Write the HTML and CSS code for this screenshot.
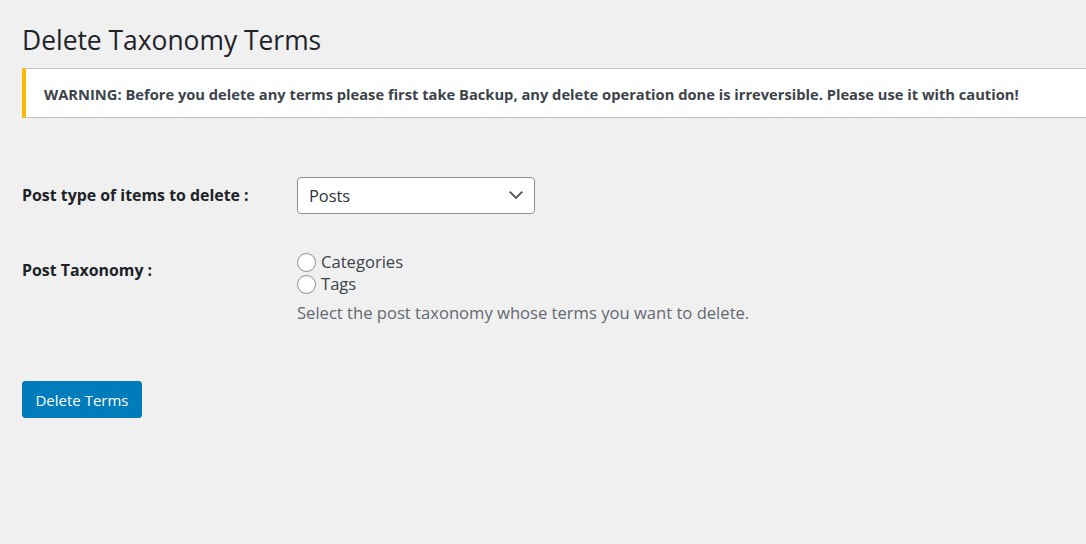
FILE: index.html
```html
<!DOCTYPE html>
<html>
<head>
<meta charset="utf-8">
<link rel="stylesheet" href="styles.css">
</head>
<body>
<div class="wrap">
  <h1 class="title">Delete Taxonomy Terms</h1>
  <div class="notice">
    <p>WARNING: Before you delete any terms please first take Backup, any delete operation done is irreversible. Please use it with caution!</p>
  </div>
  <div class="form">
    <div class="row row-type">
      <div class="label">Post type of items to delete :</div>
      <div class="field">
        <div class="select">
          <span>Posts</span>
          <svg class="chev" width="16" height="16" viewBox="0 0 16 16"><path d="M1.7 4.6 L8 10.9 L14.3 4.6" fill="none" stroke="#50575e" stroke-width="2"/></svg>
        </div>
      </div>
    </div>
    <div class="row row-tax">
      <div class="label">Post Taxonomy :</div>
      <div class="field">
        <label class="radio"><span class="circle"></span>Categories</label>
        <label class="radio"><span class="circle"></span>Tags</label>
        <p class="desc">Select the post taxonomy whose terms you want to delete.</p>
      </div>
    </div>
  </div>
  <button class="btn">Delete Terms</button>
</div>
</body>
</html>
```
FILE: styles.css
```css
html, body {
  margin: 0;
  padding: 0;
  background: #f0f0f1;
  font-family: "Open Sans", "Noto Sans", sans-serif;
  color: #1d2327;
  overflow: hidden;
}
.wrap {
  padding: 0 0 0 22px;
}
.title {
  margin: 0;
  padding-top: 23px;
  font-size: 26.4px;
  font-weight: 400;
  line-height: 34px;
  color: #1d2327;
  height: 45px;
}
.notice {
  background: #fff;
  border-top: 1px solid #c3c4c7;
  border-bottom: 1px solid #c3c4c7;
  border-left: 4px solid #ffb900;
  height: 48px;
  display: flex;
  align-items: center;
  padding-left: 18px;
}
.notice p {
  margin: 0;
  padding-top: 2px;
  font-size: 14.7px;
  font-weight: 700;
  color: #3c434a;
}
.form {
  padding-top: 58px;
}
.row {
  display: flex;
}
.label {
  width: 275px;
  font-size: 15.9px;
  font-weight: 700;
  color: #1d2327;
}
.row-type {
  align-items: center;
  height: 38px;
}
.select {
  box-sizing: border-box;
  width: 238px;
  height: 37px;
  border: 1px solid #8c8f94;
  border-radius: 4px;
  background: #fff;
  display: flex;
  align-items: center;
  justify-content: space-between;
  padding: 0 10px 0 11px;
  font-size: 16.4px;
  color: #2c3338;
}
.row-tax {
  margin-top: 37px;
}
.row-tax .label {
  padding-top: 8px;
}
.field {
  display: flex;
  flex-direction: column;
}
.radio {
  display: flex;
  align-items: center;
  font-size: 16.6px;
  color: #3c434a;
  height: 22px;
  line-height: 22px;
}
.circle {
  box-sizing: border-box;
  width: 19px;
  height: 19px;
  border: 1px solid #8c8f94;
  border-radius: 50%;
  background: #fff;
  margin-right: 5px;
}
.desc {
  margin: 7px 0 0;
  font-size: 16.6px;
  line-height: 22px;
  color: #646970;
}
.btn {
  margin-top: 57px;
  display: block;
  width: 120px;
  height: 37px;
  border: 1px solid #007cba;
  border-radius: 3px;
  background: #007cba;
  color: #fff;
  font-family: inherit;
  font-size: 15px;
  padding: 0;
}
```
